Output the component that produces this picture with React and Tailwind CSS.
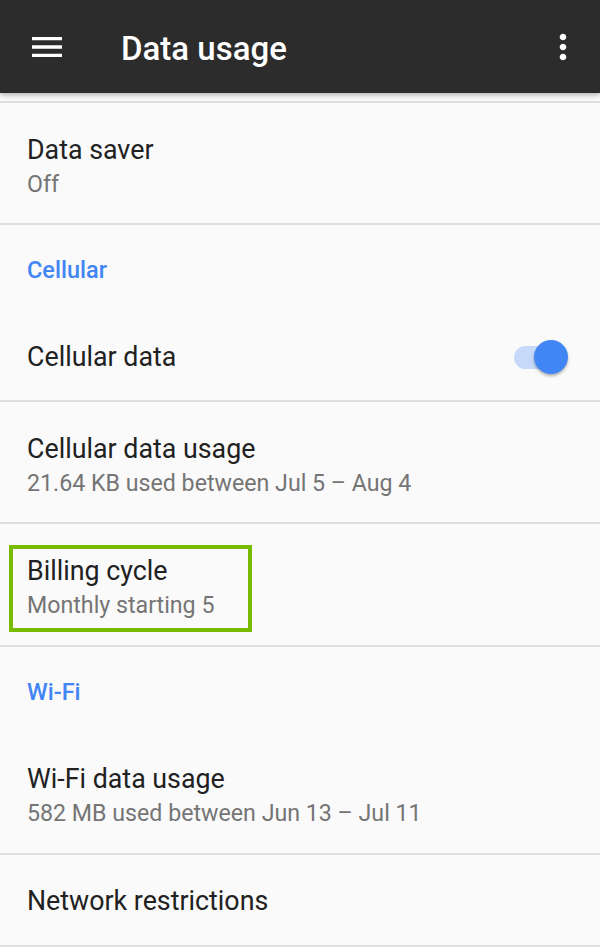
import React from "react";

const font = { fontFamily: "Roboto, 'Noto Sans', sans-serif" };

function Divider() {
  return <div className="h-[2px] bg-[#dedede]" />;
}

function TwoLine({ title, summary, children }) {
  return (
    <div className="relative h-[120px] pl-[27px] pt-[30px]">
      <div className="text-[26.8px] leading-[34px] text-[#212121]">{title}</div>
      <div className="text-[23.2px] leading-[34px] text-[#757575]">{summary}</div>
      {children}
    </div>
  );
}

function Category({ label, tall }) {
  return (
    <div className={tall ? "h-[85px] pl-[27px] pt-[28px]" : "h-[82px] pl-[27px] pt-[28px]"}>
      <div className="text-[23.5px] leading-[34px] font-medium text-[#4285f4]">{label}</div>
    </div>
  );
}

export default function App() {
  return (
    <div className="w-[600px] h-[947px] bg-[#fafafa] overflow-hidden" style={font}>
      {/* Toolbar */}
      <header className="relative z-10 h-[93px] bg-[#2c2c2c] flex items-center shadow-[0_2px_5px_rgba(0,0,0,0.3)]">
        <svg viewBox="0 0 24 24" className="ml-[27px] w-[40px] h-[40px] fill-white">
          <path d="M3 18h18v-2H3v2zm0-5h18v-2H3v2zm0-7v2h18V6H3z" />
        </svg>
        <h1 className="ml-[54px] pt-[4px] text-[33px] font-medium text-white flex-1">Data usage</h1>
        <svg viewBox="0 0 24 24" className="mr-[17px] w-[40px] h-[40px] fill-white">
          <path d="M12 8c1.1 0 2-.9 2-2s-.9-2-2-2-2 .9-2 2 .9 2 2 2zm0 2c-1.1 0-2 .9-2 2s.9 2 2 2 2-.9 2-2-.9-2-2-2zm0 6c-1.1 0-2 .9-2 2s.9 2 2 2 2-.9 2-2-.9-2-2-2z" />
        </svg>
      </header>

      <div className="h-[8px]" />
      <Divider />

      <TwoLine title="Data saver" summary="Off" />
      <Divider />

      <Category label="Cellular" />
      <div className="h-[93px] pl-[27px] pr-[32px] pt-[7px] flex items-center">
        <div className="flex-1 text-[26.8px] text-[#212121]">Cellular data</div>
        <div className="relative w-[54px] h-[34px] flex items-center">
          <div className="w-[48px] h-[23px] rounded-full bg-[#c6d9fb]" />
          <div className="absolute right-0 top-0 w-[34px] h-[34px] rounded-full bg-[#4285f4] shadow-[0_2px_3px_rgba(0,0,0,0.3)]" />
        </div>
      </div>
      <Divider />

      <TwoLine title="Cellular data usage" summary="21.64 KB used between Jul 5 – Aug 4" />
      <Divider />

      <div className="h-[121px]">
        <TwoLine title="Billing cycle" summary="Monthly starting 5">
          <div className="absolute left-[9px] top-[21px] w-[243px] h-[87px] border-[4px] border-[#78bb00]" />
        </TwoLine>
      </div>
      <Divider />

      <Category label="Wi-Fi" tall />
      <div className="h-[121px]">
        <TwoLine title="Wi-Fi data usage" summary="582 MB used between Jun 13 – Jul 11" />
      </div>
      <Divider />

      <div className="h-[90px] pl-[27px] pt-[2px] flex items-center">
        <div className="text-[26.8px] text-[#212121]">Network restrictions</div>
      </div>
      <Divider />
    </div>
  );
}
